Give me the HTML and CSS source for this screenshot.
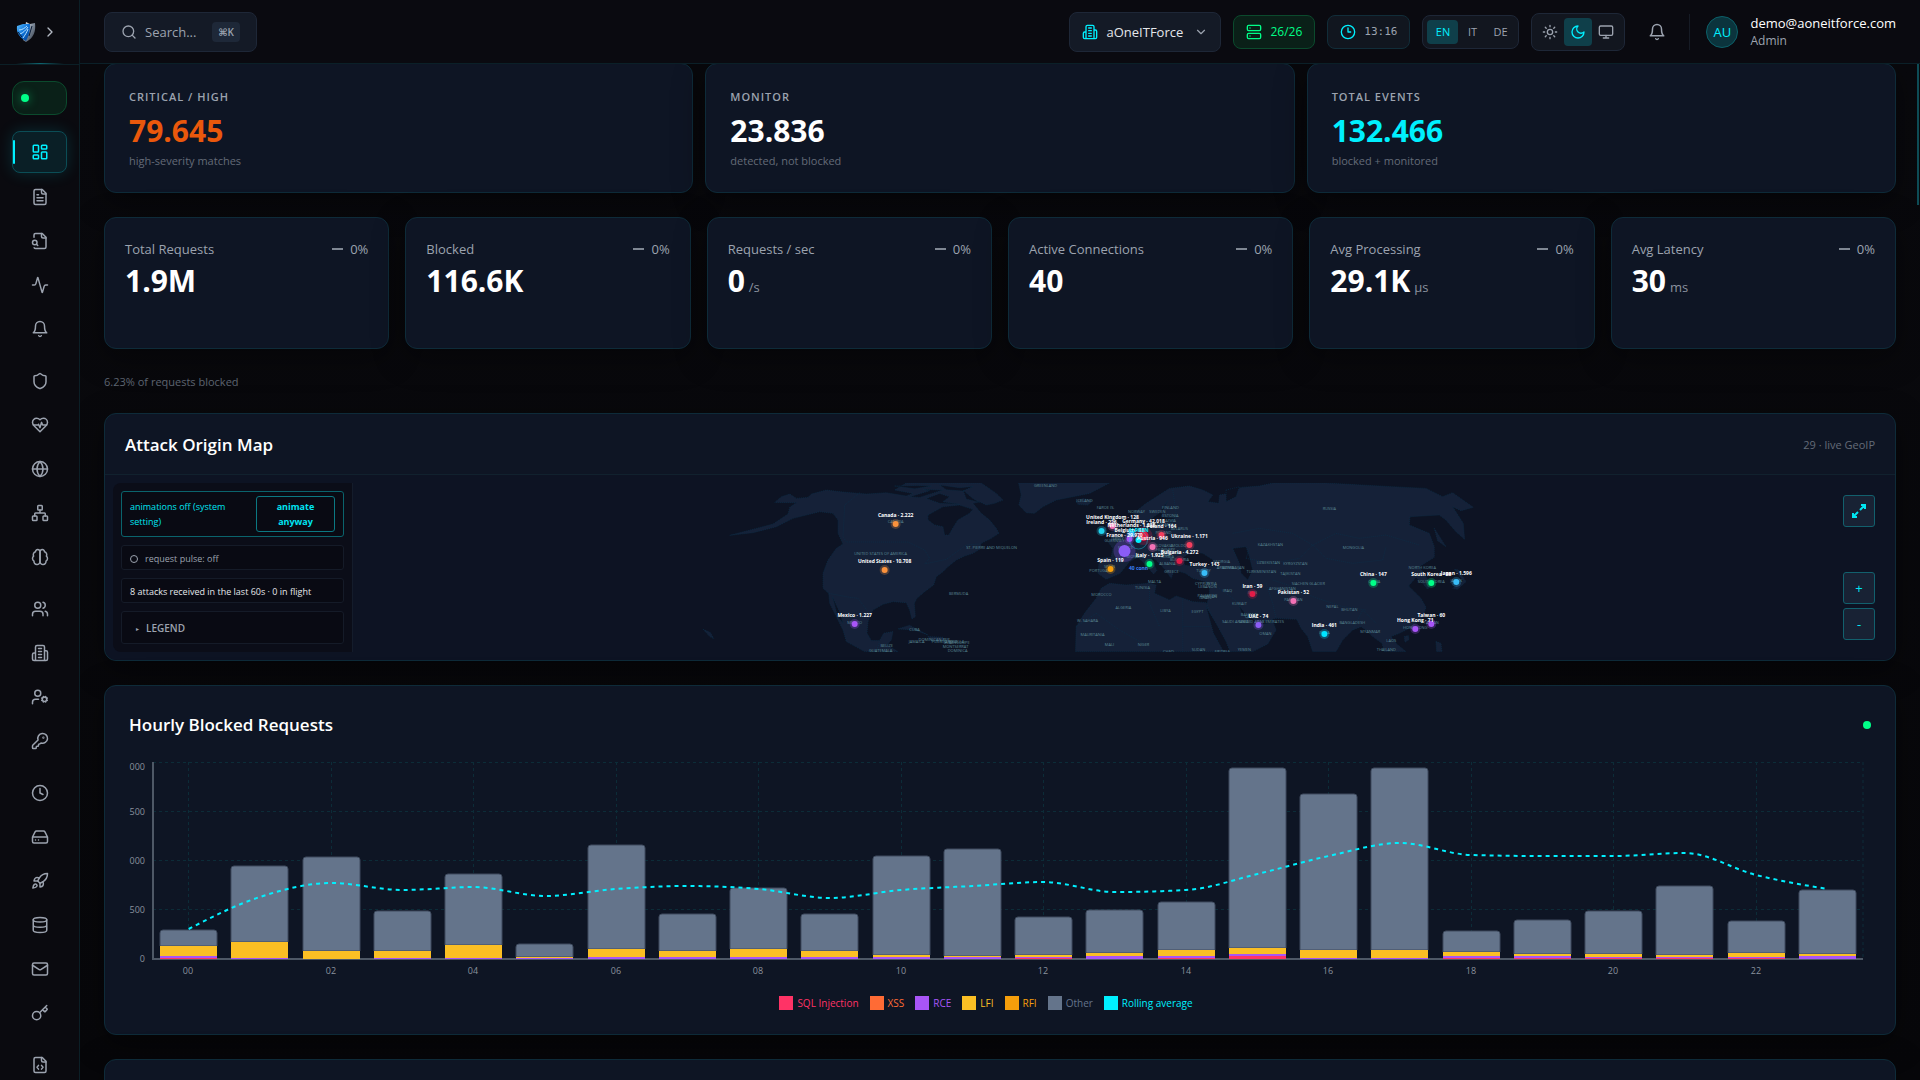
FILE: index.html
```
<!DOCTYPE html>
<html lang="en">
<head>
<meta charset="utf-8">
<title>Dashboard</title>
<link rel="stylesheet" href="styles.css">
</head>
<body>
<div class="app">
<aside class="sidebar">
  <div class="brand">
    <svg class="logo" viewBox="0 0 20 20" aria-hidden="true">
      <defs>
        <linearGradient id="lb" x1="0" y1="0" x2="1" y2="1"><stop offset="0" stop-color="#5cc0ff"/><stop offset=".5" stop-color="#0a6fd6"/><stop offset="1" stop-color="#063a86"/></linearGradient>
        <linearGradient id="lg" x1="0" y1="0" x2="1" y2="1"><stop offset="0" stop-color="#f4f7fb"/><stop offset=".5" stop-color="#7b8796"/><stop offset="1" stop-color="#2c3542"/></linearGradient>
      </defs>
      <path fill="url(#lg)" d="M10 0l4 2 5-1c1 8-1 15-9 19l-3-2z"/>
      <path fill="url(#lb)" d="M1 4l6-2 7 0c0 6-1 12-4 17C4 16 0 11 1 4z"/>
      <path d="M3 8c3 0 6-2 8-4M4 12c3-1 6-4 8-7M7 16c2-3 4-6 5-9" stroke="#b9e2ff" fill="none" stroke-width="1"/>
      <path d="M2 10l4 5M16 4l-3 10" stroke="#0a1c38" fill="none" stroke-width="1"/>
    </svg>
    <button class="expand" aria-label="Expand sidebar"><svg class="ico" viewBox="0 0 24 24"><path d="m9 18 6-6-6-6"/></svg></button>
  </div>
  <div class="status"><span class="dot"></span></div>
  <nav>
    <div class="group">
      <a class="item active" href="#" aria-label="Dashboard"><svg class="ico" viewBox="0 0 24 24"><rect width="7" height="9" x="3" y="3" rx="1"/><rect width="7" height="5" x="14" y="3" rx="1"/><rect width="7" height="9" x="14" y="12" rx="1"/><rect width="7" height="5" x="3" y="16" rx="1"/></svg></a>
      <a class="item" href="#" aria-label="Logs"><svg class="ico" viewBox="0 0 24 24"><path d="M15 2H6a2 2 0 0 0-2 2v16a2 2 0 0 0 2 2h12a2 2 0 0 0 2-2V7Z"/><path d="M14 2v4a2 2 0 0 0 2 2h4M10 9H8M16 13H8M16 17H8"/></svg></a>
      <a class="item" href="#" aria-label="Investigate"><svg class="ico" viewBox="0 0 24 24"><path d="M14 2v4a2 2 0 0 0 2 2h4"/><path d="M4.268 21a2 2 0 0 0 1.727 1H18a2 2 0 0 0 2-2V7l-5-5H6a2 2 0 0 0-2 2v3"/><path d="m9 18-1.5-1.5"/><circle cx="5" cy="14" r="3"/></svg></a>
      <a class="item" href="#" aria-label="Activity"><svg class="ico" viewBox="0 0 24 24"><path d="M22 12h-2.480a2 2 0 0 0-1.930 1.460l-2.350 8.360a.25.25 0 0 1-.48 0L9.240 2.180a.25.25 0 0 0-.48 0l-2.350 8.360A2 2 0 0 1 4.490 12H2"/></svg></a>
      <a class="item" href="#" aria-label="Alerts"><svg class="ico" viewBox="0 0 24 24"><path d="M6 8a6 6 0 0 1 12 0c0 7 3 9 3 9H3s3-2 3-9M10.300 21a1.940 1.940 0 0 0 3.400 0"/></svg></a>
    </div>
    <div class="group">
      <a class="item" href="#" aria-label="Protection"><svg class="ico" viewBox="0 0 24 24"><path d="M20 13c0 5-3.500 7.500-7.660 8.950a1 1 0 0 1-.67-.01C7.500 20.500 4 18 4 13V6a1 1 0 0 1 1-1c2 0 4.500-1.200 6.240-2.720a1.170 1.170 0 0 1 1.520 0C14.510 3.810 17 5 19 5a1 1 0 0 1 1 1z"/></svg></a>
      <a class="item" href="#" aria-label="Health"><svg class="ico" viewBox="0 0 24 24"><path d="M19 14c1.490-1.460 3-3.210 3-5.500A5.500 5.500 0 0 0 16.500 3c-1.760 0-3 .5-4.500 2-1.500-1.500-2.740-2-4.500-2A5.500 5.500 0 0 0 2 8.500c0 2.300 1.500 4.050 3 5.500l7 7Z"/><path d="M3.220 12H9.500l.5-1 2 4.500 2-7 1.500 3.500h5.270"/></svg></a>
      <a class="item" href="#" aria-label="Sites"><svg class="ico" viewBox="0 0 24 24"><circle cx="12" cy="12" r="10"/><path d="M12 2a14.500 14.500 0 0 0 0 20 14.500 14.500 0 0 0 0-20M2 12h20"/></svg></a>
      <a class="item" href="#" aria-label="Network"><svg class="ico" viewBox="0 0 24 24"><rect x="16" y="16" width="6" height="6" rx="1"/><rect x="2" y="16" width="6" height="6" rx="1"/><rect x="9" y="2" width="6" height="6" rx="1"/><path d="M5 16v-3a1 1 0 0 1 1-1h12a1 1 0 0 1 1 1v3M12 12V8"/></svg></a>
      <a class="item" href="#" aria-label="Intelligence"><svg class="ico" viewBox="0 0 24 24"><path d="M12 5a3 3 0 1 0-5.997.125 4 4 0 0 0-2.526 5.770 4 4 0 0 0 .556 6.588A4 4 0 1 0 12 18Z"/><path d="M12 5a3 3 0 1 1 5.997.125 4 4 0 0 1 2.526 5.770 4 4 0 0 1-.556 6.588A4 4 0 1 1 12 18Z"/></svg></a>
    </div>
    <div class="group">
      <a class="item" href="#" aria-label="Users"><svg class="ico" viewBox="0 0 24 24"><path d="M16 21v-2a4 4 0 0 0-4-4H6a4 4 0 0 0-4 4v2"/><circle cx="9" cy="7" r="4"/><path d="M22 21v-2a4 4 0 0 0-3-3.870M16 3.130a4 4 0 0 1 0 7.750"/></svg></a>
      <a class="item" href="#" aria-label="Organizations"><svg class="ico" viewBox="0 0 24 24"><path d="M6 22V4a2 2 0 0 1 2-2h8a2 2 0 0 1 2 2v18ZM6 12H4a2 2 0 0 0-2 2v6a2 2 0 0 0 2 2h2M18 9h2a2 2 0 0 1 2 2v9a2 2 0 0 1-2 2h-2M10 6h4M10 10h4M10 14h4M10 18h4"/></svg></a>
      <a class="item" href="#" aria-label="Roles"><svg class="ico" viewBox="0 0 24 24"><path d="M10 15H6a4 4 0 0 0-4 4v2"/><circle cx="9" cy="7" r="4"/><circle cx="18" cy="15" r="3"/><path d="m14.305 16.530.923-.382M15.228 13.852l-.923-.383M16.852 12.228l-.383-.923M16.852 17.772l-.383.924M19.148 12.228l.383-.923M19.530 18.696l-.382-.924M20.772 13.852l.924-.383M20.772 16.148l.924.383"/></svg></a>
      <a class="item" href="#" aria-label="Access keys"><svg class="ico" viewBox="0 0 24 24"><path d="M2.586 17.414A2 2 0 0 0 2 18.828V21a1 1 0 0 0 1 1h3a1 1 0 0 0 1-1v-1a1 1 0 0 1 1-1h1a1 1 0 0 0 1-1v-1a1 1 0 0 1 1-1h.172a2 2 0 0 0 1.414-.586l.814-.814a6.500 6.500 0 1 0-4-4z"/><circle cx="16.500" cy="7.500" r=".5"/></svg></a>
    </div>
    <div class="group">
      <a class="item" href="#" aria-label="Schedule"><svg class="ico" viewBox="0 0 24 24"><circle cx="12" cy="12" r="10"/><path d="M12 6v6l4 2"/></svg></a>
      <a class="item" href="#" aria-label="Storage"><svg class="ico" viewBox="0 0 24 24"><path d="M22 12H2M5.450 5.110 2 12v6a2 2 0 0 0 2 2h16a2 2 0 0 0 2-2v-6l-3.450-6.890A2 2 0 0 0 16.760 4H7.240a2 2 0 0 0-1.790 1.110zM6 16h.01M10 16h.01"/></svg></a>
      <a class="item" href="#" aria-label="Deployments"><svg class="ico" viewBox="0 0 24 24"><path d="M4.500 16.500c-1.500 1.260-2 5-2 5s3.740-.5 5-2c.71-.84.7-2.130-.09-2.910a2.180 2.180 0 0 0-2.910-.09zM12 15l-3-3a22 22 0 0 1 2-3.950A12.880 12.880 0 0 1 22 2c0 2.720-.78 7.500-6 11a22.350 22.350 0 0 1-4 2z"/><path d="M9 12H4s.55-3.030 2-4c1.620-1.080 5 0 5 0M12 15v5s3.030-.55 4-2c1.080-1.620 0-5 0-5"/></svg></a>
      <a class="item" href="#" aria-label="Database"><svg class="ico" viewBox="0 0 24 24"><ellipse cx="12" cy="5" rx="9" ry="3"/><path d="M3 5v14a9 3 0 0 0 18 0V5M3 12a9 3 0 0 0 18 0"/></svg></a>
      <a class="item" href="#" aria-label="Mail"><svg class="ico" viewBox="0 0 24 24"><rect width="20" height="16" x="2" y="4" rx="2"/><path d="m22 7-8.970 5.700a1.940 1.940 0 0 1-2.060 0L2 7"/></svg></a>
      <a class="item" href="#" aria-label="Licence"><svg class="ico" viewBox="0 0 24 24"><path d="m15.500 7.500 2.300 2.300a1 1 0 0 0 1.400 0l2.100-2.100a1 1 0 0 0 0-1.400L19 4M21 2l-9.600 9.600"/><circle cx="7.500" cy="15.500" r="5.500"/></svg></a>
    </div>
    <div class="group">
      <a class="item" href="#" aria-label="API"><svg class="ico" viewBox="0 0 24 24"><path d="M15 2H6a2 2 0 0 0-2 2v16a2 2 0 0 0 2 2h12a2 2 0 0 0 2-2V7Z"/><path d="M14 2v4a2 2 0 0 0 2 2h4M10 12.500 8 15l2 2.500M14 12.500l2 2.500-2 2.500"/></svg></a>
    </div>
  </nav>
</aside>

<div class="page">
<header class="topbar">
  <label class="search">
    <svg class="ico" viewBox="0 0 24 24"><circle cx="11" cy="11" r="8"/><path d="m21 21-4.300-4.300"/></svg>
    <input type="text" placeholder="Search..." aria-label="Search">
    <kbd>⌘K</kbd>
  </label>
  <div class="tools">
    <label class="org">
      <svg class="ico" viewBox="0 0 24 24"><path d="M6 22V4a2 2 0 0 1 2-2h8a2 2 0 0 1 2 2v18ZM6 12H4a2 2 0 0 0-2 2v6a2 2 0 0 0 2 2h2M18 9h2a2 2 0 0 1 2 2v9a2 2 0 0 1-2 2h-2M10 6h4M10 10h4M10 14h4M10 18h4"/></svg>
      <select aria-label="Organization"><option>aOneITForce</option></select>
      <svg class="ico chev" viewBox="0 0 24 24"><path d="m6 9 6 6 6-6"/></svg>
    </label>
    <div class="chip green"><svg class="ico" viewBox="0 0 24 24"><rect width="20" height="8" x="2" y="2" rx="2"/><rect width="20" height="8" x="2" y="14" rx="2"/><path d="M6 6h.01M6 18h.01"/></svg><span>26/26</span></div>
    <div class="chip time"><svg class="ico" viewBox="0 0 24 24"><circle cx="12" cy="12" r="10"/><path d="M12 6v6h4"/></svg><time>13:16</time></div>
    <div class="seg langs"><button class="on">EN</button><button>IT</button><button>DE</button></div>
    <div class="seg themes">
      <button aria-label="Light"><svg class="ico" viewBox="0 0 24 24"><circle cx="12" cy="12" r="4"/><path d="M12 2v2M12 20v2M4.930 4.930l1.410 1.410M17.660 17.660l1.410 1.410M2 12h2M20 12h2M6.340 17.660l-1.410 1.410M19.070 4.930l-1.410 1.410"/></svg></button>
      <button class="on" aria-label="Dark"><svg class="ico" viewBox="0 0 24 24"><path d="M12 3a6 6 0 0 0 9 9 9 9 0 1 1-9-9Z"/></svg></button>
      <button aria-label="System"><svg class="ico" viewBox="0 0 24 24"><rect width="20" height="14" x="2" y="3" rx="2"/><path d="M8 21h8M12 17v4"/></svg></button>
    </div>
    <button class="bell" aria-label="Notifications"><svg class="ico" viewBox="0 0 24 24"><path d="M6 8a6 6 0 0 1 12 0c0 7 3 9 3 9H3s3-2 3-9M10.300 21a1.940 1.940 0 0 0 3.400 0"/></svg></button>
    <div class="user">
      <span class="avatar">AU</span>
      <div><div class="mail">demo@aoneitforce.com</div><div class="role">Admin</div></div>
    </div>
  </div>
</header>

<main class="content">
  <section class="row three">
    <article class="card big"><h3>Critical / High</h3><strong class="num orange">79.645</strong><p>high-severity matches</p></article>
    <article class="card big"><h3>Monitor</h3><strong class="num">23.836</strong><p>detected, not blocked</p></article>
    <article class="card big"><h3>Total Events</h3><strong class="num cyan">132.466</strong><p>blocked + monitored</p></article>
  </section>

  <section class="row six">
    <article class="card kpi"><div class="top"><span>Total Requests</span><span class="trend">0%</span></div><strong class="num">1.9M</strong></article>
    <article class="card kpi"><div class="top"><span>Blocked</span><span class="trend">0%</span></div><strong class="num">116.6K</strong></article>
    <article class="card kpi"><div class="top"><span>Requests / sec</span><span class="trend">0%</span></div><strong class="num">0</strong><small>/s</small></article>
    <article class="card kpi"><div class="top"><span>Active Connections</span><span class="trend">0%</span></div><strong class="num">40</strong></article>
    <article class="card kpi"><div class="top"><span>Avg Processing</span><span class="trend">0%</span></div><strong class="num">29.1K</strong><small>µs</small></article>
    <article class="card kpi"><div class="top"><span>Avg Latency</span><span class="trend">0%</span></div><strong class="num">30</strong><small>ms</small></article>
  </section>

  <p class="note">6.23% of requests blocked</p>

  <section class="card map">
    <header><h2>Attack Origin Map</h2><span>29 · live GeoIP</span></header>
    <div class="mapbody">
      <div class="panel">
        <div class="box anim"><span>animations off (system setting)</span><button>animate anyway</button></div>
        <button class="box pulse"><i></i>request pulse: off</button>
        <div class="box">8 attacks received in the last 60s · 0 in flight</div>
        <details class="box legendbox"><summary><b>▸</b>Legend</summary></details>
      </div>
      <div class="world">
        <svg id="world" viewBox="353 483 1535 169" role="img" aria-label="Attack origins by country">
          <g class="land" transform="translate(680 470) scale(.33333)">
            <path d="M285 97L305 80 330 72 350 85 385 82 395 72 440 60 490 66 560 72 620 68 680 78 700 70 645 60 680 39H905L950 70 970 90 945 100 920 105 900 95 880 100 905 130 930 150 950 175 958 190 935 205 905 220 900 238 880 250 855 258 830 270 805 290 790 305 770 320 762 345 735 365 712 385 704 400 707 440 697 447 690 420 680 398 640 395 610 403 580 420 565 455 562 490 575 512 600 512 612 490 640 485 635 510 622 525 655 545H555L500 515 490 480 470 440 450 400 447 370 430 355V310L445 270 470 235 490 222 475 190V150L460 130 420 125 380 135 340 145 290 170 220 188 150 196 280 162 325 132 330 112 350 98Z"/>
            <path d="M1017 39H1290L1230 70 1130 90 1090 110 1065 130 1040 128 1018 105 1025 75Z"/>
            <path d="M655 477L690 466 745 495 705 480ZM70 478l22 10 10 18-12-6zM745 500l45 2 5 12h-40z"/>
            <path class="sea" d="M745 135L790 110 840 105 880 118 870 130 835 150 822 170 808 195H795L790 170 765 165 745 150ZM458 380L482 430 490 460 474 440ZM740 85l40-15 30 10-20 15 50 8-60-3zM850 60l30 25 20 12-40-10zM690 80l60-18-20-4 60 2-70 22zM645 48l60 8 50-8-40-2zM780 45l60 8 40-4-30 14-50-4z"/>
            <path class="line" d="M540 68L495 105 490 200 500 216H685L735 240 750 265 735 282 800 268 860 225 900 222M447 370L510 382 535 385 565 425M590 545l10-30"/>
          </g>
          <g class="land" transform="translate(1060 470) scale(.33333)">
            <path d="M235 165L222 130 260 100 330 55 390 48 430 60 460 75 445 95 478 100 480 75 520 68 545 52 600 48 640 39H800L1000 50 1100 55 1150 80 1180 68 1242 112 1205 122 1180 110 1212 160 1216 208 1190 185 1160 150 1140 135 1052 140 1050 165 1110 190 1125 230V262L1080 290 1100 320 1115 345 1105 358 1090 340 1070 322 1048 348 1062 362 1085 385 1100 412 1090 442 1060 470 1020 490 995 500 1012 522 1040 545H975L968 520 940 500 920 480 905 470 880 480 850 510 830 545H760L745 500 725 475 712 448 650 445 638 448 650 480 625 522 580 545H500L480 500 440 415 450 370V338L400 325 378 310 345 300 335 325 318 300 290 270 275 262 292 302 282 312 255 280 235 262 210 275 182 310 140 328 115 310 120 265 155 262 160 235 145 215 195 190Z"/>
            <path d="M48 545L50 470 75 430 110 385 125 355 150 340 200 345 270 340 290 345 285 370 330 390 350 378 400 395 440 398 470 470 490 515 510 545Z"/>
            <path d="M150 190L165 180 150 150 168 138 188 190 160 205ZM120 175L140 170V190L120 192ZM50 95L70 85 100 92 85 105 55 103ZM1180 355L1212 332 1185 298 1198 300 1220 335 1195 358ZM1125 175L1160 230 1135 212ZM1130 515L1145 520 1148 545H1132ZM1035 500l12-3 2 12-12 8z"/>
            <path class="sea" d="M372 262L395 245 430 250 470 275 480 290 440 288 400 290 375 285ZM520 235L560 230 570 260 580 300 565 330 545 310 540 280ZM262 155L298 130 325 92 312 118 305 140 350 145 300 160 272 178ZM540 408L565 440 600 455 640 450 638 458 590 466 545 425ZM440 410L470 460 500 515 512 545H492L462 490ZM500 60l40-10-10 30-30 15z"/>
            <path class="line" d="M50 470L110 430 180 480 250 520M270 345V400L300 470M370 385V470H450M370 470V545M520 190L600 175 700 190 760 225 720 265 640 280 560 265M760 225L830 190 900 205 980 195 1080 225M760 225L800 265 880 280 970 270 980 230M640 330L700 350 760 380 850 410 920 420M620 340L640 400 650 445M460 340L540 400M340 60L350 130 320 180M300 180l90 0 20 40-80 30-90-20zM200 200l60 30-10 40M560 265l10-30M880 480l30-60 40 40"/>
          </g>
          <g id="pins"></g>
        </svg>
        <button class="ctl full" aria-label="Fullscreen"><svg viewBox="0 0 14 14"><path d="M8 6l5-5M9 1h4v4M6 8l-5 5M1 9v4h4" stroke="currentColor" stroke-width="2" fill="none"/></svg></button>
        <div class="zoomers"><button class="ctl">+</button><button class="ctl">-</button></div>
      </div>
    </div>
  </section>

  <section class="card hourly">
    <header><h2>Hourly Blocked Requests</h2><span class="live"></span></header>
    <svg id="chart" viewBox="129 754 1742 232" role="img" aria-label="Hourly blocked requests"></svg>
    <ul class="legend">
      <li class="sql">SQL Injection</li><li class="xss">XSS</li><li class="rce">RCE</li><li class="lfi">LFI</li><li class="rfi">RFI</li><li class="oth">Other</li><li class="avg">Rolling average</li>
    </ul>
  </section>

  <section class="card next"></section>
</main>
</div>
</div>
<script src="app.js"></script>
</body>
</html>
```
FILE: styles.css
```
* { box-sizing: border-box; margin: 0; padding: 0; }
body { background: #09090d; color: #fff; font: 13px/20px "Open Sans", "Noto Sans", sans-serif; }
button, input, select { font: inherit; color: inherit; background: none; border: 0; }
button { cursor: pointer; }
.ico { width: 18px; height: 18px; fill: none; stroke: currentColor; stroke-width: 2; stroke-linecap: round; stroke-linejoin: round; flex: none; display: block; }
.app { display: flex; height: 100vh; overflow: hidden; }

/* Sidebar */
.sidebar { width: 80px; flex: none; background: #0a0a0f; border-right: 1px solid #0b1f26; overflow: hidden; color: #9ca3af; }
.brand { height: 65px; display: flex; align-items: center; gap: 2px; padding: 0 16px; border-bottom: 1px solid #0b1f26; background: linear-gradient(90deg, transparent, #0e6670, transparent) 50% 100% / 48px 1px no-repeat; }
.logo { width: 20px; height: 20px; }
.expand { padding: 4px; color: #b4bac4; }
.expand .ico { width: 16px; height: 16px; }
.status { height: 34px; margin: 16px 12px; padding: 0 8px; border: 1px solid #0b4a2d; border-radius: 12px; background: #0a2018; display: flex; align-items: center; }
.dot { width: 8px; height: 8px; border-radius: 50%; background: #00ff88; box-shadow: 0 0 10px #00ff8880; }
nav { display: flex; flex-direction: column; gap: 10px; padding: 0 12px; }
.group { display: flex; flex-direction: column; gap: 2px; }
.item { height: 42px; display: flex; align-items: center; justify-content: center; border-radius: 8px; color: #9ca3af; padding-top: 2px; }
.item.active { color: #00f0ff; background: #0a1f26; border: 1px solid #0b4d56; padding: 0; box-shadow: 0 0 16px #00f0ff26; position: relative; }
.item.active::before { content: ""; position: absolute; left: 0; top: 8px; bottom: 8px; width: 2px; background: #00f0ff; border-radius: 2px; }

/* Top bar */
.page { flex: 1; min-width: 0; display: flex; flex-direction: column; position: relative; }
.page::after { content: ""; position: absolute; right: 1px; top: 61px; width: 2px; height: 144px; background: #0d4c56; }
.topbar { height: 64px; flex: none; display: flex; align-items: center; justify-content: space-between; padding: 0 24px; background: #0a0a10; border-bottom: 1px solid #0b2028; position: relative; z-index: 1; }
.search, .org { display: flex; align-items: center; height: 40px; background: #141a26; border: 1px solid #1e2737; border-radius: 8px; }
.search { width: 153px; padding: 0 16px; gap: 8px; color: #9ca3af; }
.search .ico { width: 16px; height: 16px; }
.search input { width: 60px; flex: 1; min-width: 0; outline: 0; }
.search input::placeholder { color: #9ca3af; }
kbd { background: #1e2838; border-radius: 4px; font: 600 10px/20px "Open Sans", "DejaVu Sans", sans-serif; padding: 0 6px; }
.tools { display: flex; align-items: center; gap: 12px; color: #9ca3af; }
.org { width: 152px; padding: 0 12px; gap: 8px; color: #e5e7eb; }
.org .ico { width: 16px; height: 16px; color: #00f0ff; }
.org .chev { width: 14px; height: 14px; color: #9ca3af; }
.org select { appearance: none; outline: 0; flex: 1; min-width: 0; }
.chip { display: flex; align-items: center; gap: 8px; height: 34px; padding: 0 12px; border-radius: 8px; border: 1px solid; font-size: 12px; }
.chip .ico { width: 16px; height: 16px; }
.chip.green { color: #00ff88; background: #0a2018; border-color: #0b4a2d; }
.chip.time { background: #11161f; border-color: #112d39; font: 11px/20px "DejaVu Sans Mono", monospace; }
.chip.time .ico { color: #00f0ff; }
.seg { display: flex; align-items: center; padding: 4px; border: 1px solid #1e2737; background: #12161f; border-radius: 8px; }
.seg button { border-radius: 4px; }
.seg .on { background: #0f3f4a; color: #00f0ff; }
.langs button { height: 24px; width: 28px; font-size: 11px; }
.langs .on { width: 31px; }
.themes button { width: 28px; height: 28px; display: flex; align-items: center; justify-content: center; }
.themes .ico { width: 16px; height: 16px; }
.bell { width: 40px; height: 40px; display: flex; align-items: center; justify-content: center; }
.user { display: flex; align-items: center; gap: 12px; height: 36px; padding-left: 16px; border-left: 1px solid #161b25; font-size: 13px; line-height: 18px; }
.avatar { width: 32px; height: 32px; border-radius: 50%; border: 1px solid #0c6069; background: #0b343d; color: #00f0ff; display: flex; align-items: center; justify-content: center; }
.mail { color: #fff; font-weight: 500; }
.role { font-size: 12px; }

/* Cards */
.content { flex: 1; min-height: 0; overflow-y: auto; scrollbar-width: none; margin-top: -1px; padding: 0 24px; display: flex; flex-direction: column; gap: 24px; background: linear-gradient(#09090d, #07070a); }
.content > * { flex: none; }
.card { background: #0e1524; border: 1px solid #0e2b39; border-radius: 12px; box-shadow: 0 8px 32px #0006; }
.row { display: grid; }
.three { grid-template-columns: repeat(3, 1fr); gap: 12px; }
.six { grid-template-columns: repeat(6, 1fr); gap: 16px; }
.big { padding: 25px 24px 23px; }
.big h3 { font-size: 11px; line-height: 16px; font-weight: 600; letter-spacing: 1px; text-transform: uppercase; color: #9ca3af; margin-bottom: 8px; }
.big .num { display: block; }
.big p { font-size: 11px; line-height: 16px; margin-top: 4px; color: #646b78; }
.num { font-size: 30px; line-height: 36px; font-weight: 700; }
.orange { color: #ea580c; }
.cyan { color: #00f0ff; }
.kpi { padding: 21px 20px; min-height: 132px; }
.kpi .top { display: flex; justify-content: space-between; color: #9ca3af; margin-bottom: 4px; }
.kpi small { color: #8b929f; font-size: 13px; margin-left: 4px; }
.trend { display: flex; align-items: center; gap: 7px; }
.trend::before { content: ""; width: 11px; height: 2px; background: #7f8793; }
.note { color: #5d6470; font-size: 11px; line-height: 16px; padding-top: 1px; margin-bottom: -1px; }
h2 { font-size: 17px; line-height: 28px; font-weight: 600; }

/* Attack map */
.map > header { display: flex; align-items: center; justify-content: space-between; height: 61px; padding: 1px 20px 0; border-bottom: 1px solid #11212e; color: #646b78; font-size: 11px; }
.map h2 { color: #fff; }
.mapbody { display: flex; padding: 8px; background: #0d1323; border-radius: 0 0 12px 12px; }
.panel { width: 240px; flex: none; background: #0b0d18; border-right: 1px solid #141c2b; border-radius: 8px 0 0 8px; padding: 8px; display: flex; flex-direction: column; gap: 8px; font-size: 9px; line-height: 15px; color: #e5e7eb; }
.box { background: #090a13; border: 1px solid #151b28; border-radius: 3px; padding: 5px 8px 3px; min-height: 25px; text-align: left; }
.anim { display: flex; align-items: center; justify-content: space-between; border-color: #0a636c; color: #00e5f2; min-height: 46px; padding: 4px 8px; }
.anim span { width: 106px; font-weight: 500; }
.anim button { width: 79px; padding: 2px 8px; border: 1px solid #0b7882; border-radius: 3px; font-weight: 700; }
.pulse { color: #9ca3af; display: flex; align-items: center; gap: 7px; }
.pulse i { width: 8px; height: 8px; border: 1px solid #9ca3af; border-radius: 50%; }
.legendbox { min-height: 33px; padding: 9px 14px 7px; color: #9ca3af; font-weight: 600; text-transform: uppercase; font-size: 10px; }
.legendbox summary { list-style: none; display: flex; gap: 7px; }
.legendbox b { font: 6px/15px "DejaVu Sans", sans-serif; }
.world { flex: 1; min-width: 0; position: relative; }
#world { display: block; width: 100%; height: 169px; }
.land path { fill: #152138; stroke: #0a2f49; stroke-width: 2; stroke-dasharray: 3 3; }
.land .sea { fill: #0d1323; }
.land .line { fill: none; }
.country { fill: #5a8793; font-size: 4px; text-anchor: middle; }
.pinlabel { fill: #fff; font-size: 5px; font-weight: 700; text-anchor: middle; }
.ctl { width: 32px; height: 32px; display: flex; align-items: center; justify-content: center; border: 1px solid #12606d; border-radius: 3px; background: #182234; color: #00e5f2; font-size: 13px; }
.ctl svg { width: 14px; height: 14px; }
.full { position: absolute; right: 12px; top: 12px; }
.zoomers { position: absolute; right: 12px; bottom: 12px; display: flex; flex-direction: column; gap: 4px; }

/* Hourly chart */
.hourly { padding: 25px 24px 23px; }
.hourly > header { display: flex; align-items: center; justify-content: space-between; margin-bottom: 15px; }
.live { width: 8px; height: 8px; border-radius: 50%; background: #00ff88; }
#chart { display: block; width: 100%; }
#chart text { font-size: 9px; fill: #8a919d; }
.grid { fill: none; stroke: #0c2c38; stroke-dasharray: 3 3; }
.axis { fill: none; stroke: #4e5866; stroke-width: 2; }
.roll { fill: none; stroke: #00f0ff; stroke-width: 2; stroke-dasharray: 4 4; }
.legend { list-style: none; display: flex; justify-content: center; gap: 11px; margin-top: 9px; padding-right: 28px; font-size: 10px; line-height: 16px; }
.legend li { display: flex; align-items: center; gap: 4px; }
.legend li::before { content: ""; width: 14px; height: 14px; background: currentColor; }
.sql { color: #ff3366; }
.xss { color: #ff6b35; }
.rce { color: #a855f7; }
.lfi { color: #fbbf24; }
.rfi { color: #f59e0b; }
.oth { color: #64748b; }
.avg { color: #00f0ff; }
.next { height: 120px; }
```
FILE: app.js
```
const NS = 'http://www.w3.org/2000/svg';
function add(parent, tag, attrs, text) {
  const e = document.createElementNS(NS, tag);
  for (const k in attrs) e.setAttribute(k, attrs[k]);
  if (text !== undefined) e.textContent = text;
  parent.append(e);
  return e;
}

/* Hourly chart: [total, LFI top, RCE top, SQL top] above the base line */
const BASE = 959, LEFT = 153, RIGHT = 1863, STEP = (RIGHT - LEFT) / 24;
const bars = [[29,13,3,1],[93,17,1,0],[102,8,0,0],[48,8,1,0],[85,14,1,0],[15,2,1,0],[114,10,2,0],[45,8,2,0],[71,10,2,0],[45,8,2,0],[103,4,2,0],[110,3,2,0],[42,4,2,1],[49,6,3,0],[57,9,3,1],[191,11,5,3],[165,9,1,0],[191,9,1,0],[28,7,3,1],[39,5,3,1],[48,5,2,1],[73,4,2,1],[38,6,2,1],[69,5,3,0]];
const avg = [929,897,883,890,887,896,889,886,889,898,890,886,882,892,890,874,856,843,855,856,856,853,875,889];
const chart = document.getElementById('chart');
[762, 811, 860, 909].forEach(y => add(chart, 'path', { class: 'grid', d: `M${LEFT} ${y}.5H${RIGHT}` }));
for (let i = 0; i < 24; i += 2) {
  const x = Math.floor(LEFT + STEP * (i + .5));
  add(chart, 'path', { class: 'grid', d: `M${x}.5 762V${BASE}` });
  add(chart, 'text', { x, y: 974, 'text-anchor': 'middle' }, String(i).padStart(2, '0'));
}
add(chart, 'path', { class: 'grid', d: `M${RIGHT} 762V${BASE}` });
add(chart, 'path', { class: 'axis', d: `M${LEFT} 762V${BASE}H${RIGHT}` });
[['000', 770], ['500', 815], ['000', 864], ['500', 913], ['0', 962]].forEach(([t, y]) => add(chart, 'text', { x: 145, y, 'text-anchor': 'end' }, t));
bars.forEach(([total, lfi, rce, sql], i) => {
  const x = Math.round(LEFT + STEP * i + 7), w = 57, t = BASE - total;
  add(chart, 'path', { fill: '#64748b', stroke: '#3f4b5f', 'stroke-width': 1, d: `M${x} ${BASE - lfi}V${t + 3}q0-3 3-3H${x + w - 3}q3 0 3 3V${BASE - lfi}Z` });
  [[lfi, '#fbbf24'], [rce, '#a855f7'], [sql, '#ff3366']].forEach(([h, fill]) => h && add(chart, 'rect', { x, y: BASE - h, width: w, height: h, fill }));
});
/* Monotone cubic through the averages */
const slope = avg.map((y, i) => {
  if (i === 0 || i === 23) return 0;
  const a = y - avg[i - 1], b = avg[i + 1] - y;
  return a * b <= 0 ? 0 : Math.sign(a) * Math.min(Math.abs(a), Math.abs(b), Math.abs(a + b) / 4) * 2;
});
slope[0] = (3 * (avg[1] - avg[0]) - slope[1]) / 2;
slope[23] = (3 * (avg[23] - avg[22]) - slope[22]) / 2;
let d = `M${LEFT + STEP / 2} ${avg[0]}`;
for (let i = 1; i < 24; i++) {
  const x0 = LEFT + STEP * (i - .5), x1 = x0 + STEP;
  d += `C${x0 + STEP / 3} ${avg[i - 1] + slope[i - 1] / 3} ${x1 - STEP / 3} ${avg[i] - slope[i] / 3} ${x1} ${avg[i]}`;
}
add(chart, 'path', { class: 'roll', d });

/* Map labels and attack origins */
const pins = document.getElementById('pins');
const countries = [['GREENLAND',1046,487],['CANADA',896,523],['UNITED STATES OF AMERICA',881,555],['ST. PIERRE AND MIQUELON',992,549],['BERMUDA',959,595],['MEXICO',855,624],['CUBA',915,631],['JAMAICA',917,643],['DOMINICAN REP.',935,641],['PUERTO RICO',945,643],['ANGUILLA',955,643],['GUADELOUPE',957,644],['MONTSERRAT',956,648],['DOMINICA',958,652],['BELIZE',887,647],['GUATEMALA',881,652],
['ICELAND',1085,502],['FAROE IS.',1106,509],['NORWAY',1137,513],['FINLAND',1171,509],['SWEDEN',1158,513],['ESTONIA',1171,517],['LATVIA',1170,522],['LITHUANIA',1164,526],['BELARUS',1180,530],['POLAND',1164,534],['GUERNSEY',1115,542],['JERSEY',1118,540],['FRANCE',1126,549],['SLOVAKIA',1164,547],['HUNGARY',1166,551],['MOLDOVA',1182,547],['ROMANIA',1172,554],['SERBIA',1168,558],['BOSNIA',1163,556],['ALBANIA',1168,565],['BULGARIA',1180,561],['MONACO',1136,558],['SPAIN',1110,568],['PORTUGAL',1100,572],['GREECE',1172,573],['MALTA',1155,583],['TUNISIA',1143,589],['MOROCCO',1102,596],['ALGERIA',1124,609],['LIBYA',1166,612],['EGYPT',1198,613],['W. SAHARA',1088,622],['MAURITANIA',1093,636],['MALI',1110,646],['NIGER',1144,646],['CHAD',1169,653],['SUDAN',1199,651],['ERITREA',1223,653],['YEMEN',1245,651],['OMAN',1266,635],['SAUDI ARABIA',1236,623],['UNITED ARAB EMIRATES',1262,623],['QATAR',1252,618],['BAHRAIN',1250,616],['KUWAIT',1240,605],['IRAQ',1228,592],['IRAN',1253,594],['LEBANON',1208,588],['CYPRUS',1203,585],['SYRIA',1212,585],['PALESTINE',1208,597],['JORDAN',1210,598],['ISRAEL',1206,599],['TURKEY',1204,572],['GEORGIA',1222,563],['ARMENIA',1226,569],['AZERBAIJAN',1234,569],['KAZAKHSTAN',1271,546],['UZBEKISTAN',1269,564],['TURKMENISTAN',1262,573],['KYRGYZSTAN',1296,565],['TAJIKISTAN',1291,575],['SIACHEN GLACIER',1309,585],['AFGHANISTAN',1283,590],['PAKISTAN',1294,601],['NEPAL',1333,608],['BHUTAN',1350,611],['BANGLADESH',1353,624],['INDIA',1325,634],['MYANMAR',1371,633],['LAOS',1392,642],['THAILAND',1387,651],['RUSSIA',1330,510],['MONGOLIA',1354,549],['CHINA',1375,583],['NORTH KOREA',1423,569],['SOUTH KOREA',1432,583],['JAPAN',1457,582],['HONG KONG',1416,629],['TAIWAN',1432,624]];
countries.forEach(([t, x, y]) => add(pins, 'text', { class: 'country', x, y }, t));
const origins = [
['Canada · 2.222',896,524,'#fb923c',3],['United States · 10.708',885,570,'#fb923c',3],['Mexico · 1.227',855,624,'#a855f7',3],
['United Kingdom · 128',1113,526,'#f472b6',3],['Ireland · 226',1102,531,'#22d3ee',3],['Germany · 42.018',1144,536,'#e11d48',5],['Netherlands · 1.288',1132,534,'#38bdf8',3],['Poland · 164',1162,535,'#f43f5e',3],['Belgium · 88',1130,539,'#a855f7',3],['Ukraine · 1.171',1190,545,'#f43f5e',3],['France · 29.970',1125,551,'#8b5cf6',6],['Austria · 946',1153,547,'#f472b6',3],['Bulgaria · 4.272',1180,561,'#e11d48',3],['Italy · 1.925',1150,564,'#00ff88',3],['Spain · 119',1111,569,'#f59e0b',3],['Turkey · 143',1205,573,'#38bdf8',3],
['Iran · 59',1253,594,'#e11d48',3],['Pakistan · 52',1294,601,'#f472b6',3],['UAE · 74',1259,625,'#8b5cf6',3],['India · 461',1325,634,'#00e5ff',3],['China · 147',1374,583,'#00ff88',3],['South Korea · 88',1432,583,'#00ff88',3],['Japan · 1.596',1457,582,'#38bdf8',3],['Taiwan · 60',1432,624,'#a855f7',3],['Hong Kong · 71',1416,629,'#a855f7',3]];
origins.forEach(([, x, y, c, r]) => {
  add(pins, 'circle', { cx: x, cy: y, r: r * 2 - 1, fill: c, opacity: .25 });
  add(pins, 'circle', { cx: x, cy: y, r, fill: c });
});
add(pins, 'circle', { cx: 1139, cy: 540, r: 9, fill: 'none', stroke: '#22d3ee', opacity: .4 });
add(pins, 'circle', { cx: 1139, cy: 540, r: 3, fill: '#00f0ff' });
const shift = { 'France · 29.970': [0, -14], 'Germany · 42.018': [0, -13], 'Netherlands · 1.288': [0, -7], 'Iran · 59': [0, -6] };
origins.forEach(([t, x, y]) => {
  const [dx, dy] = shift[t] || [0, -7];
  add(pins, 'text', { class: 'pinlabel', x: x + dx, y: y + dy }, t);
});
add(pins, 'text', { class: 'pinlabel', x: 1139, y: 532, style: 'fill:#00f0ff' }, 'ALPHEN');
add(pins, 'text', { class: 'pinlabel', x: 1139, y: 570, style: 'fill:#3b82f6' }, '40 conn');
```
